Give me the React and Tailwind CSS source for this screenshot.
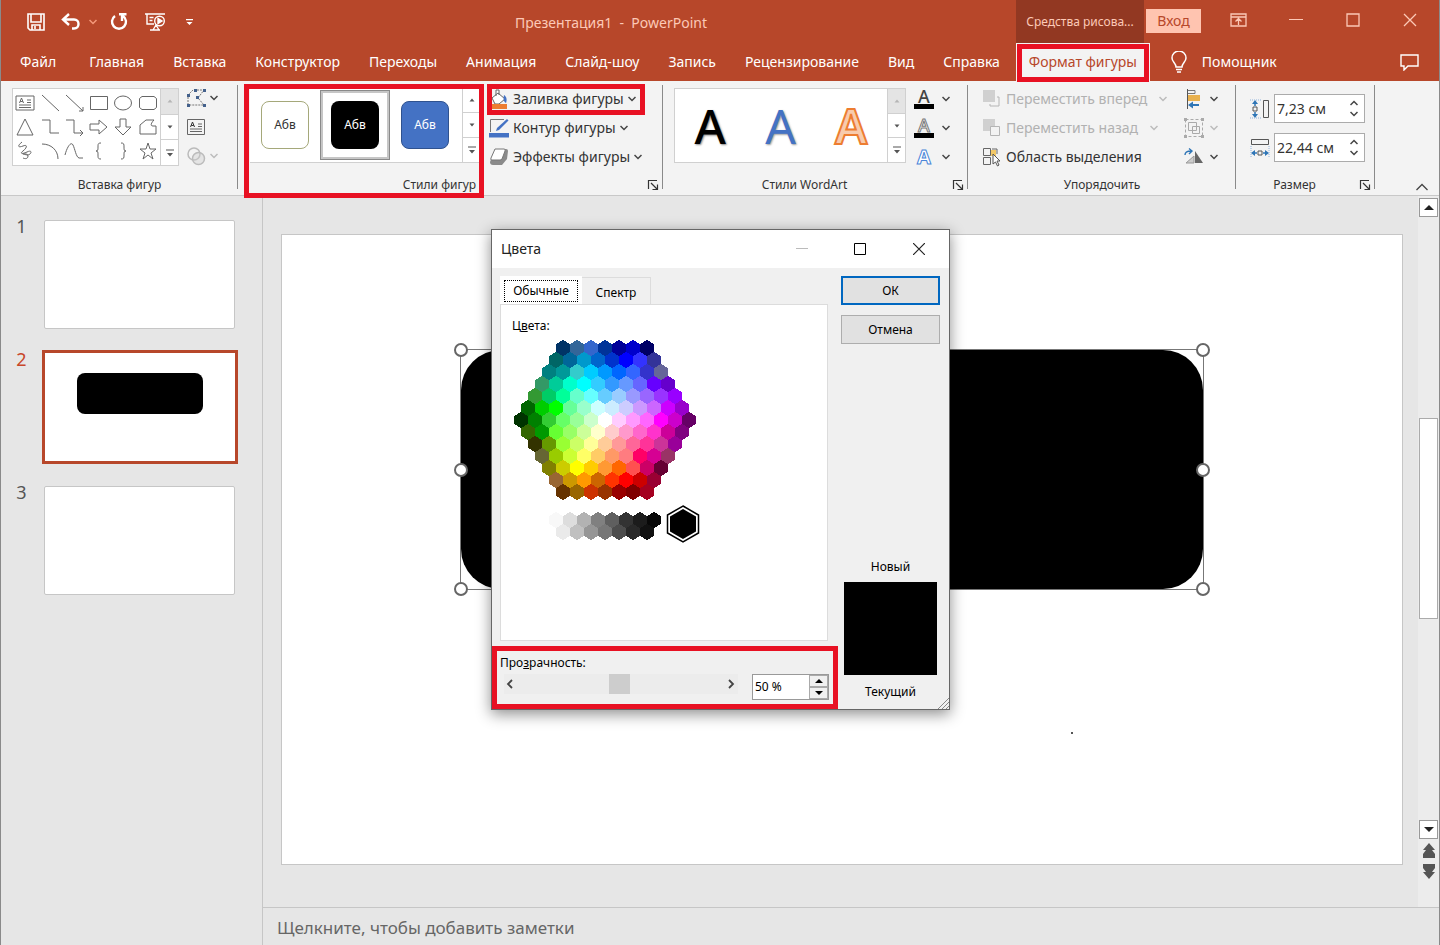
import { useState } from "react";

// Ribbon tabs
const tabs = [
  "Главная",
  "Вставка",
  "Конструктор",
  "Переходы",
  "Анимация",
  "Слайд-шоу",
  "Запись",
  "Рецензирование",
  "Вид",
  "Справка",
];

// Standard palette, one array per row of the honeycomb
const hexRows = [
  ["003366", "336699", "3366cc", "003399", "000099", "0000cc", "000066"],
  ["006666", "006699", "0099cc", "0066cc", "0033cc", "0000ff", "3333ff", "333399"],
  ["008080", "009999", "33cccc", "00ccff", "0099ff", "0066ff", "3366ff", "3333cc", "666699"],
  ["339966", "00cc99", "00ffcc", "00ffff", "33ccff", "3399ff", "6699ff", "6666ff", "6600ff", "6600cc"],
  ["339933", "00cc66", "00ff99", "66ffcc", "66ffff", "66ccff", "99ccff", "9999ff", "9966ff", "9933ff", "9900ff"],
  ["006600", "00cc00", "00ff00", "66ff99", "99ffcc", "ccffff", "ccecff", "ccccff", "cc99ff", "cc66ff", "cc00ff", "9900cc"],
  ["003300", "008000", "33cc33", "66ff66", "99ff99", "ccffcc", "ffffff", "ffccff", "ff99ff", "ff66ff", "ff00ff", "cc00cc", "660066"],
  ["336600", "009900", "66ff33", "99ff66", "ccff99", "ffffcc", "ffcccc", "ff99cc", "ff66cc", "ff33cc", "cc0099", "800080"],
  ["333300", "669900", "99ff33", "ccff66", "ffff99", "ffcc99", "ff9999", "ff6699", "ff3399", "cc3399", "990099"],
  ["666633", "99cc00", "ccff33", "ffff66", "ffcc66", "ff9966", "ff7c80", "ff0066", "d60093", "993366"],
  ["808000", "cccc00", "ffff00", "ffcc00", "ff9933", "ff6600", "ff5050", "cc0066", "660033"],
  ["996633", "cc9900", "ff9900", "cc6600", "ff3300", "ff0000", "cc0000", "990033"],
  ["663300", "996600", "cc3300", "993300", "990000", "800000", "a50021"],
];

const grayRows = [
  ["f8f8f8", "dddddd", "b2b2b2", "808080", "5f5f5f", "333333", "1c1c1c", "080808"],
  ["eaeaea", "c0c0c0", "969696", "777777", "4d4d4d", "292929", "111111"],
];

const hexPoints = (cx, cy, rx, ry) =>
  `${cx},${cy - ry} ${cx + rx},${cy - ry / 2} ${cx + rx},${cy + ry / 2} ${cx},${cy + ry} ${cx - rx},${cy + ry / 2} ${cx - rx},${cy - ry / 2}`;

// Shapes in the insert gallery, drawn on a 20x20 grid
const shapes = [
  { name: "Надпись", d: "M1 3h18v14H1zM12 7h4M12 9.500h4M4 12h12M4 14.500h12M4.500 10l2-5 2 5M5.200 8.500h2.600" },
  { name: "Линия", d: "M2 2l17 16" },
  { name: "Стрелка", d: "M2 2l17 16M19 14v4h-4" },
  { name: "Прямоугольник", d: "M1.500 3.500h17v13h-17z" },
  { name: "Овал", d: "M1.500 10a8.500 7 0 1 0 17 0a8.500 7 0 1 0-17 0z" },
  { name: "Скругленный прямоугольник", d: "M4 3.500h12l2.500 2v9l-2.500 2H4l-2.500-2v-9z" },
  { name: "Треугольник", d: "M10 2l8 16H2z" },
  { name: "Соединитель", d: "M2 3h8v13h9" },
  { name: "Соединитель со стрелкой", d: "M2 3h8v13h8M16 13l3 3-3 3" },
  { name: "Стрелка вправо", d: "M1 7h9V3l8 7-8 7v-4H1z" },
  { name: "Стрелка вниз", d: "M7 2h6v8h5l-8 8-8-8h5z" },
  { name: "Фигура", d: "M2 17V8l6-5h8c-3 3-4 6-1 6h3v8z" },
  { name: "Полилиния", d: "M7 1c-5 4-4 6 1 4s4 2 0 5 0 3 4 1 5 0 3 2-6 0-7 0 5-1 5 2-3 3-5 2" },
  { name: "Дуга", d: "M2 3c9 0 16 6 16 15" },
  { name: "Кривая", d: "M1 14c2-8 6-14 8-10s3 12 6 13h4" },
  { name: "Левая скобка", d: "M12 2c-3 0-3 1-3 4s0 4-2 4c2 0 2 1 2 4s0 4 3 4" },
  { name: "Правая скобка", d: "M8 2c3 0 3 1 3 4s0 4 2 4c-2 0-2 1-2 4s0 4-3 4" },
  { name: "Звезда", d: "M10 2l2 6h6l-5 4 2 6-5-4-5 4 2-6-5-4h6z" },
];

const Chevron = ({ className = "text-[#444]" }) => (
  <svg className={`w-2 h-2 shrink-0 ${className}`} viewBox="0 0 8 8" fill="none">
    <path d="M0.500 2l3.500 3.500L7.500 2" stroke="currentColor" strokeWidth="1.500" />
  </svg>
);

// Up / down / more strip at the right side of a gallery
const GalleryScroll = ({ name, upDisabled }) => (
  <div className="flex flex-col w-[18px] shrink-0 border-l border-[#d0d0d0] divide-y divide-[#d0d0d0]">
    <button
      aria-label={`${name}: вверх`}
      className={`flex-1 flex items-center justify-center ${upDisabled ? "bg-[#e4e4e4] text-[#b5b5b5]" : "bg-white text-[#555]"}`}
    >
      <svg width="6" height="4" viewBox="0 0 6 4"><path d="M0.500 3.500L3 0.500l2.500 3z" fill="currentColor" /></svg>
    </button>
    <button aria-label={`${name}: вниз`} className="flex-1 flex items-center justify-center bg-white text-[#555]">
      <svg width="6" height="4" viewBox="0 0 6 4"><path d="M0.500 0.500L3 3.500l2.500-3z" fill="currentColor" /></svg>
    </button>
    <button aria-label={`${name}: еще`} className="flex-1 flex items-center justify-center bg-white text-[#555]">
      <svg width="8" height="8" viewBox="0 0 8 8"><path d="M0 0.500h8v1H0zM1 4l3 3.500L7 4z" fill="currentColor" /></svg>
    </button>
  </div>
);

const Launcher = ({ name }) => (
  <button aria-label={name} className="absolute right-1 bottom-1 text-[#333]">
    <svg width="12" height="12" viewBox="0 0 12 12" fill="none" stroke="currentColor">
      <path d="M1.500 10V1.500H10M4 4l6 6M10.500 5.500v5h-5" strokeWidth="1.200" />
    </svg>
  </button>
);

// Ribbon group with a caption at the bottom
const Group = ({ label, width, launcher, children }) => (
  <section className={`relative shrink-0 pt-[7px] ${width}`}>
    <div className="flex items-start h-[85px]">{children}</div>
    <h2 className={`h-[22px] text-xs leading-6 text-center text-[#333] ${launcher ? "pr-[22px]" : ""}`}>{label}</h2>
    {launcher && <Launcher name={launcher} />}
    <div className="absolute right-0 top-1 bottom-[6px] w-px bg-[#8a8a8a]" />
  </section>
);

const Highlight = ({ className }) => (
  <div className={`absolute z-10 border-[#e81123] pointer-events-none ${className}`} />
);

const TextBoxIcon = () => (
  <svg className="w-5 h-5" viewBox="0 0 20 20" fill="none" stroke="#666">
    <path d="M1.500 2.500h17v15h-17zM12 7h4M12 9.500h4M4 12h12M4 14.500h12" />
    <path d="M4.500 10l2-5 2 5M5.200 8.500h2.600" stroke="#333" />
  </svg>
);

const TitleBar = () => (
  <div className="flex h-[43px] pr-px text-[#fcc9b7]">
    <div className="flex items-center w-[205px] pl-[26px] shrink-0 text-white">
      <button aria-label="Сохранить">
        <svg width="18" height="18" viewBox="0 0 18 18" fill="none" stroke="currentColor" strokeWidth="1.600">
          <path d="M1 1h16v16H3l-2-2zM4 1v8h10V1M5 17v-5h8v5M8 13v3" />
        </svg>
      </button>
      <button aria-label="Отменить" className="ml-4">
        <svg width="20" height="18" viewBox="0 0 20 18" fill="none" stroke="currentColor" strokeWidth="2.400">
          <path d="M8 1L2 6.500 8 12M2.500 6.500H13c6 0 6 9 0 9h-2" />
        </svg>
      </button>
      <button aria-label="Список отмены" className="ml-2">
        <Chevron className="text-[#f59a7c]" />
      </button>
      <button aria-label="Повторить" className="ml-3">
        <svg width="20" height="20" viewBox="0 0 20 20" fill="none" stroke="currentColor" strokeWidth="2.400">
          <path d="M6 4a7 7 0 1 0 8 0M10 2.200h7.500M13 2v7" />
        </svg>
      </button>
      <button aria-label="Начать показ" className="ml-4">
        <svg width="21" height="20" viewBox="0 0 21 20" fill="none" stroke="currentColor" strokeWidth="1.400">
          <path d="M0 2h20M2 2v10h7M4.500 5.500h4M4.500 8.500h3M8 18l3-5 3 5M5 18h10" />
          <circle cx="14.500" cy="9" r="4.800" />
          <path d="M13 6.500v5l4-2.500z" fill="currentColor" />
        </svg>
      </button>
      <button aria-label="Настройка панели быстрого доступа" className="ml-5">
        <svg width="7" height="8" viewBox="0 0 7 8" fill="currentColor"><path d="M0 1h7v1.300H0zM0.500 4h6l-3 3z" /></svg>
      </button>
    </div>
    <h1 className="flex-1 text-center text-sm leading-[45px] whitespace-pre">Презентация1  -  PowerPoint</h1>
    <div className="w-32 shrink-0 bg-[#923822] text-center text-xs leading-[43px]">Средства рисова...</div>
    <button className="w-[55px] h-6 mt-[9px] ml-[2px] bg-[#ffc4b0] text-sm text-[#b7472a]">Вход</button>
    <div className="flex h-10 ml-[9px]">
      <button aria-label="Параметры отображения ленты" className="w-[57px] flex items-center justify-center">
        <svg width="17" height="14" viewBox="0 0 17 14" fill="none" stroke="currentColor" strokeWidth="1.300">
          <path d="M1 1h15v12H1zM1 4h15M8.500 12V6M5.500 8.500l3-3 3 3" />
        </svg>
      </button>
      <button aria-label="Свернуть" className="w-[57px] flex items-center justify-center">
        <svg width="14" height="14" viewBox="0 0 14 14" fill="none" stroke="currentColor"><path d="M0 6.500h14" /></svg>
      </button>
      <button aria-label="Развернуть" className="w-[57px] flex items-center justify-center">
        <svg width="14" height="14" viewBox="0 0 14 14" fill="none" stroke="currentColor"><path d="M1 1h12v12H1z" strokeWidth="1.300" /></svg>
      </button>
      <button aria-label="Закрыть" className="w-[57px] flex items-center justify-center">
        <svg width="14" height="14" viewBox="0 0 14 14" fill="none" stroke="currentColor"><path d="M1 1l12 12M13 1L1 13" strokeWidth="1.300" /></svg>
      </button>
    </div>
  </div>
);

const TabBar = () => (
  <nav className="flex items-center h-[38px] pl-[19px] pr-5 text-sm text-white">
    <button className="mr-[33px]">Файл</button>
    <div className="flex gap-[29px]">
      {tabs.map((tab) => (
        <button key={tab}>{tab}</button>
      ))}
    </div>
    <div className="relative flex self-stretch ml-4">
      <button className="w-[134px] bg-[#f3f3f3] text-[#b7472a]">Формат фигуры</button>
      <Highlight className="inset-x-px top-px -bottom-px border-[5px]" />
    </div>
    <button className="flex items-center gap-[14px] ml-5">
      <svg width="18" height="22" viewBox="0 0 18 22" fill="none" stroke="currentColor" strokeWidth="1.500">
        <path d="M6 16c0-4-4-5-4-9a7 7 0 0 1 14 0c0 4-4 5-4 9zM6 18.500h6M7 21h4" />
      </svg>
      Помощник
    </button>
    <button aria-label="Примечания" className="ml-auto">
      <svg width="19" height="17" viewBox="0 0 19 17" fill="none" stroke="currentColor" strokeWidth="1.400">
        <path d="M1 1h17v11H8l-4 4v-4H1z" />
      </svg>
    </button>
  </nav>
);

const ShapeCommand = ({ label, icon }) => (
  <button className="flex items-center h-[29px] gap-1 text-sm text-[#333] whitespace-nowrap">
    {icon}
    {label}
    <Chevron />
  </button>
);

const fillIcon = (
  <svg className="w-5 h-5" viewBox="0 0 20 20" fill="none">
    <path d="M3 9l6-5 7 6-6 5H6zM7 7V1h3v5" fill="#fff" stroke="#666" />
    <path d="M15 6c3 2 3 5 2 8-2-1-3-3-2-8z" fill="#4472c4" />
    <path d="M1 15h17v5H1z" fill="#ed7d31" />
  </svg>
);
const outlineIcon = (
  <svg className="w-5 h-5" viewBox="0 0 20 20" fill="none">
    <path d="M1.500 14V1.500H15" stroke="#777" />
    <path d="M7 13l1-3 10-9 1.500 1.500L10 12z" fill="#4472c4" />
    <path d="M0 15h20v4.500H0z" fill="#4472c4" />
  </svg>
);
const effectsIcon = (
  <svg className="w-5 h-5" viewBox="0 0 20 20">
    <path d="M6 2h11q2 0 2 2l-1 8-5 6H4q-3 0-3-3z" fill="#8a8a8a" />
    <path d="M6 2h9q2 0 1 2l-3 8q-1 1-2 1H3q-2 0-1-2z" fill="#fff" stroke="#777" />
  </svg>
);

// Letter icon for WordArt fill / outline / effects
const LetterButton = ({ label, children }) => (
  <button aria-label={label} className="flex items-center gap-2 h-[29px]">
    <span className="flex flex-col items-center w-5">{children}</span>
    <Chevron />
  </button>
);

const SizeField = ({ id, label, value, icon }) => (
  <div className="flex items-center gap-1">
    {icon}
    <div className="flex w-[91px] h-[29px] bg-white border border-[#ababab]">
      <input id={id} aria-label={label} defaultValue={value} className="w-full min-w-0 pl-[2px] text-sm text-[#333] outline-none" />
      <div className="flex flex-col justify-between w-5 shrink-0 py-1">
        <button aria-label={`${label}: больше`} className="flex justify-center">
          <Chevron className="rotate-180 text-[#444]" />
        </button>
        <button aria-label={`${label}: меньше`} className="flex justify-center">
          <Chevron />
        </button>
      </div>
    </div>
  </div>
);

const Ribbon = () => (
  <div className="flex h-[115px] bg-[#f3f3f3] border-b border-[#c8c8c8]">
    <Group label="Вставка фигур" width="w-[237px]">
      <div className="flex w-[167px] h-[78px] ml-[11px] bg-white border border-[#d0d0d0]">
        <div className="grid grid-cols-6 flex-1 py-[2px]">
          {shapes.map((s) => (
            <button key={s.name} aria-label={s.name} className="flex items-center justify-center">
              <svg className="w-5 h-5" viewBox="0 0 20 20" fill="none" stroke="#666"><path d={s.d} /></svg>
            </button>
          ))}
        </div>
        <GalleryScroll name="Фигуры" upDisabled />
      </div>
      <div className="flex flex-col ml-[7px]">
        <button aria-label="Изменить фигуру" className="flex items-center gap-1 h-5">
          <svg className="w-5 h-5" viewBox="0 0 20 20" fill="none">
            <path d="M2 17V7l5-5h11l-6 8 6 7z" stroke="#777" strokeDasharray="2 1" />
            <path d="M1 6h3v3H1zM8 1h3v3H8zM17 1h3v3h-3zM10 8h3v3h-3zM17 16h3v3h-3zM1 16h3v3H1z" fill="#44618c" />
          </svg>
          <Chevron />
        </button>
        <button aria-label="Надпись" className="flex items-center h-[38px]">
          <TextBoxIcon />
        </button>
        <button aria-label="Объединить фигуры" className="flex items-center gap-1 h-5">
          <svg className="w-5 h-5" viewBox="0 0 20 20" fill="none" stroke="#bbb" strokeWidth="1.500">
            <circle cx="8" cy="8" r="6" /><circle cx="12.500" cy="12.500" r="6" fill="#ccc" fillOpacity=".4" />
          </svg>
          <Chevron className="text-[#bbb]" />
        </button>
      </div>
    </Group>

    <Group label="Стили фигур" width="w-[425px]" launcher="Формат фигуры">
      <div className="flex w-[230px] h-[75px] ml-[12px] bg-white border-b border-[#d0d0d0]">
        <div className="flex flex-1 items-start pt-[2px]">
          <button className="w-[70px] h-[70px] p-[11px] text-xs">
            <span className="flex items-center justify-center h-full bg-white border border-[#a5a87a] rounded-lg text-[#333]">Абв</span>
          </button>
          <button className="w-[70px] h-[70px] p-[8px] border-[3px] border-[#c6c6c6] outline outline-[#8a8a8a] -outline-offset-1 text-xs">
            <span className="flex items-center justify-center h-full bg-black rounded-lg text-white">Абв</span>
          </button>
          <button className="w-[70px] h-[70px] p-[11px] text-xs">
            <span className="flex items-center justify-center h-full bg-[#4472c4] border border-[#2f528f] rounded-lg text-white">Абв</span>
          </button>
        </div>
        <GalleryScroll name="Стили" />
      </div>
      <div className="flex flex-col ml-[9px] -mt-1">
        <ShapeCommand label="Заливка фигуры" icon={fillIcon} />
        <ShapeCommand label="Контур фигуры" icon={outlineIcon} />
        <ShapeCommand label="Эффекты фигуры" icon={effectsIcon} />
      </div>
      <Highlight className="left-[6px] top-[3px] w-[240px] h-[114px] border-[5px]" />
      <Highlight className="left-[249px] top-[3px] w-[158px] h-[31px] border-[5px]" />
    </Group>

    <Group label="Стили WordArt" width="w-[305px]" launcher="Эффекты текста">
      <div className="flex w-[232px] h-[75px] ml-[11px] bg-white border border-[#d0d0d0]">
        <div className="flex flex-1 items-center justify-around text-5xl leading-[70px]">
          <button className="text-black font-medium [text-shadow:1px_1px_2px_#888]">A</button>
          <button className="text-[#4472c4] [text-shadow:1px_1px_2px_#999]">A</button>
          <button className="text-[#f8cbad] font-semibold [-webkit-text-stroke:2px_#ed7d31]">A</button>
        </div>
        <GalleryScroll name="WordArt" upDisabled />
      </div>
      <div className="flex flex-col ml-2 -mt-1">
        <LetterButton label="Заливка текста">
          <span className="text-lg leading-4 font-medium text-[#444]">A</span>
          <span className="w-5 h-[5px] bg-black" />
        </LetterButton>
        <LetterButton label="Контур текста">
          <span className="text-lg leading-4 font-medium text-white [-webkit-text-stroke:1px_#777]">A</span>
          <span className="w-5 h-[5px] bg-black" />
        </LetterButton>
        <LetterButton label="Текстовые эффекты">
          <span className="text-xl leading-5 font-bold text-white [-webkit-text-stroke:1px_#4a86d8]">A</span>
        </LetterButton>
      </div>
    </Group>

    <Group label="Упорядочить" width="w-[268px]">
      <div className="flex flex-col w-[200px] ml-[14px] -mt-1 text-sm text-[#b1b1b1] whitespace-nowrap">
        <button className="flex items-center gap-1 h-[29px]" disabled>
          <svg className="w-5 h-5" viewBox="0 0 20 20" fill="none"><path d="M1 1h12v12H1z" fill="#d0d0d0" /><path d="M15 8h2v9H8v-2" stroke="#b5b5b5" /></svg>
          Переместить вперед
          <Chevron className="ml-2 text-[#bbb]" />
        </button>
        <button className="flex items-center gap-1 h-[29px]" disabled>
          <svg className="w-5 h-5" viewBox="0 0 20 20" fill="none"><path d="M1 1h12v12H1z" fill="#d0d0d0" /><path d="M8.500 8.500h9v9h-9z" fill="#f3f3f3" stroke="#b5b5b5" /></svg>
          Переместить назад
          <Chevron className="ml-2 text-[#bbb]" />
        </button>
        <button className="flex items-center gap-1 h-[29px] text-[#333]">
          <svg className="w-5 h-5" viewBox="0 0 20 20" fill="none">
            <path d="M8 3h6v6H8z" fill="#f3c969" />
            <path d="M1.500 1.500h7v7h-7zM1.500 10.500h7v7h-7zM10 2h5v5" stroke="#666" />
            <path d="M11 7v10l2.500-2 2 4 1.500-1-2-4h3z" fill="#fff" stroke="#555" />
          </svg>
          Область выделения
        </button>
      </div>
      <div className="flex flex-col ml-[2px] -mt-1">
        <button aria-label="Выровнять" className="flex items-center gap-[6px] h-[29px]">
          <svg className="w-5 h-5" viewBox="0 0 20 20" fill="none">
            <path d="M3.500 0v20" stroke="#555" /><path d="M4 1.500h7v3H4" stroke="#777" />
            <path d="M4 6h12v6H4z" fill="#e8b14f" /><path d="M4 16l5-3.500V15h6v2H9v2.500z" fill="#2e75b6" />
          </svg>
          <Chevron />
        </button>
        <button aria-label="Группировать" className="flex items-center gap-[6px] h-[29px]" disabled>
          <svg className="w-5 h-5" viewBox="0 0 20 20" fill="none" stroke="#aaa">
            <path d="M4.500 4.500h8v8h-8zM8.500 8.500h7v7h-7z" /><path d="M1.500 1.500h17v17h-17z" strokeDasharray="3 2" />
            <path d="M0 0h3v3H0zM17 0h3v3h-3zM0 17h3v3H0zM17 17h3v3h-3z" fill="#aaa" stroke="none" />
          </svg>
          <Chevron className="text-[#bbb]" />
        </button>
        <button aria-label="Повернуть" className="flex items-center gap-[6px] h-[29px]">
          <svg className="w-5 h-5" viewBox="0 0 20 20" fill="none"><path d="M11 16V4l8 12z" fill="#666" /><path d="M10 16V9l-8 7z" fill="#ccc" stroke="#999" /><path d="M1 8c0-3 2-4 6-4M5 1.500L8 4 5 7" stroke="#2e75b6" strokeWidth="1.400" /></svg>
          <Chevron />
        </button>
      </div>
    </Group>

    <Group label="Размер" width="w-[139px]" launcher="Размер и положение">
      <div className="flex flex-col gap-[10px] ml-[14px] pt-[6px]">
        <SizeField
          id="height"
          label="Высота фигуры"
          value="7,23 см"
          icon={
            <svg className="w-5 h-5" viewBox="0 0 20 20" fill="none">
              <path d="M13.500 1.500h5v17h-5z" stroke="#555" />
              <path d="M2 5l3-4 3 4zM2 15l3 4 3-4z" fill="#2e75b6" /><path d="M5 4v3M5 13v3" stroke="#2e75b6" strokeWidth="1.500" />
              <path d="M3 8h4v4H3z" stroke="#555" /><path d="M0 1h12M0 19h12" stroke="#8fb3dc" strokeDasharray="1 1" />
            </svg>
          }
        />
        <SizeField
          id="width"
          label="Ширина фигуры"
          value="22,44 см"
          icon={
            <svg className="w-5 h-5" viewBox="0 0 20 20" fill="none">
              <path d="M1.500 1.500h17v5h-17z" stroke="#555" />
              <path d="M5 12l-4 3 4 3zM15 12l4 3-4 3z" fill="#2e75b6" /><path d="M4 15h3M13 15h3" stroke="#2e75b6" strokeWidth="1.500" />
              <path d="M8 13h4v4H8z" stroke="#555" /><path d="M1 8v12M19 8v12" stroke="#8fb3dc" strokeDasharray="1 1" />
            </svg>
          }
        />
      </div>
    </Group>

    <button aria-label="Свернуть ленту" className="self-end ml-auto mr-[11px] mb-1">
      <svg width="12" height="8" viewBox="0 0 12 8" fill="none" stroke="#444" strokeWidth="1.300"><path d="M0.500 7L6 1.500 11.500 7" /></svg>
    </button>
  </div>
);

// Slide thumbnails
const Sidebar = () => (
  <aside className="w-[262px] shrink-0 pt-[25px] border-r border-[#c6c6c6]">
    <ol>
      {[1, 2, 3].map((n) => (
        <li key={n} className="flex h-[133px]">
          <span className={`w-[41px] text-lg leading-6 -mt-[7px] text-center ${n === 2 ? "text-[#c8472a]" : "text-[#555]"}`}>{n}</span>
          <button
            aria-label={`Слайд ${n}`}
            className={
              n === 2
                ? "flex justify-center items-start w-[196px] h-[114px] -mt-1 pt-5 bg-white border-[3px] border-[#b7472a]"
                : "w-[191px] h-[109px] ml-[2px] -mt-px bg-white border border-[#c6c6c6] rounded-xs"
            }
          >
            {n === 2 && <span className="w-[126px] h-[41px] bg-black rounded-lg" />}
          </button>
        </li>
      ))}
    </ol>
  </aside>
);

const handles = [
  "left-0 top-0",
  "left-full top-0",
  "left-0 top-1/2",
  "left-full top-1/2",
  "left-0 top-full",
  "left-full top-full",
];

const Slide = () => (
  <div className="relative aspect-video bg-white border border-[#c6c6c6]">
    <div className="absolute left-[178px] top-[114px] w-[744px] h-[241px] border border-[#777]">
      <div className="h-full bg-black rounded-[40px]" />
      {handles.map((pos) => (
        <span key={pos} className={`absolute w-[14px] h-[14px] -translate-1/2 bg-white border-2 border-[#666] rounded-full ${pos}`} />
      ))}
    </div>
    <span className="absolute left-[789px] top-[497px] w-[2px] h-[2px] bg-[#555]" />
  </div>
);

const ScrollBar = () => (
  <div className="flex flex-col items-center w-[21px] shrink-0 bg-[#ececec]">
    <button aria-label="Прокрутить вверх" className="flex items-center justify-center w-[19px] h-[19px] mt-[2px] bg-white border border-[#999]">
      <svg width="10" height="5" viewBox="0 0 10 5"><path d="M0 5l5-5 5 5z" fill="#222" /></svg>
    </button>
    <div className="flex items-center w-[19px] flex-1">
      <div className="w-full h-1/3 bg-white border border-[#ababab]" />
    </div>
    <button aria-label="Прокрутить вниз" className="flex items-center justify-center w-[19px] h-[19px] bg-white border border-[#999]">
      <svg width="10" height="5" viewBox="0 0 10 5"><path d="M0 0l5 5 5-5z" fill="#222" /></svg>
    </button>
    <button aria-label="Предыдущий слайд" className="mt-1">
      <svg width="14" height="16" viewBox="0 0 14 16"><path d="M7 0l6 7h-3l3 4v4H1v-4l3-4H1z" fill="#555" /></svg>
    </button>
    <button aria-label="Следующий слайд" className="mt-1 mb-7">
      <svg width="14" height="16" viewBox="0 0 14 16"><path d="M7 16l6-7h-3l3-4V1H1v4l3 4H1z" fill="#555" /></svg>
    </button>
  </div>
);

const HexPalette = () => (
  <svg width="190" height="205" viewBox="0 0 190 205" role="img" aria-label="Палитра цветов">
    <g shapeRendering="crispEdges">
      {hexRows.map((row, r) =>
        row.map((c, i) => (
          <polygon key={`${r}-${i}`} points={hexPoints(91 + (i - (row.length - 1) / 2) * 14, 8 + r * 12, 7, 8)} fill={`#${c}`} />
        ))
      )}
      {grayRows.map((row, r) =>
        row.map((c, i) => (
          <polygon key={`g${r}-${i}`} points={hexPoints(91 + (i - (row.length - 1) / 2) * 14, 180 + r * 12, 7, 8)} fill={`#${c}`} />
        ))
      )}
    </g>
    <polygon points={hexPoints(169, 184, 15.5, 18)} fill="#fff" stroke="#000" strokeWidth="1.500" />
    <polygon points={hexPoints(169, 184, 13, 15)} fill="#000" />
  </svg>
);

const ColorDialog = () => {
  const [opacity, setOpacity] = useState(50);
  const step = (delta) => setOpacity((v) => Math.min(100, Math.max(0, v + delta)));

  return (
    <div
      role="dialog"
      aria-label="Цвета"
      className="absolute left-[490px] top-[229px] z-20 flex flex-col w-[459px] h-[481px] bg-[#f0f0f0] border border-[#666] shadow-[0_4px_14px_rgba(0,0,0,0.45)] text-xs text-black"
    >
      <div className="flex items-center h-[38px] pl-[9px] pr-6 bg-white">
        <h2 className="flex-1 text-sm text-[#222]">Цвета</h2>
        <button aria-label="Свернуть окно" disabled>
          <svg width="12" height="12" viewBox="0 0 12 12" stroke="#bbb"><path d="M0 5.500h12" /></svg>
        </button>
        <button aria-label="Развернуть окно" className="ml-[46px]">
          <svg width="12" height="12" viewBox="0 0 12 12" fill="none" stroke="#000"><path d="M0.500 0.500h11v11H0.500z" /></svg>
        </button>
        <button aria-label="Закрыть окно" className="ml-[47px]">
          <svg width="12" height="12" viewBox="0 0 12 12" stroke="#222" strokeWidth="1.200"><path d="M0 0l12 12M12 0L0 12" /></svg>
        </button>
      </div>

      <div className="flex flex-1">
        <div className="flex flex-col w-[346px]">
          <div className="flex flex-col flex-1 pt-2 pl-2 pr-[10px] pb-[5px]">
            <div className="flex items-end h-7">
              <button className="w-[82px] h-7 pl-1 pr-1 pt-1 pb-[2px] bg-white">
                <span className="flex items-center justify-center h-full border border-dotted border-black">Обычные</span>
              </button>
              <button className="w-[69px] h-[27px] pt-1 border-t border-r border-[#dcdcdc]">Спектр</button>
            </div>
            <div className="flex-1 px-[11px] pt-[13px] bg-white border border-[#dcdcdc]">
              <p className="leading-4">
                Ц<u>в</u>ета:
              </p>
              <div className="mt-[6px] ml-[2px]">
                <HexPalette />
              </div>
            </div>
          </div>
          <div className="h-[63px] pt-[4px] pl-[3px] border-[5px] border-[#e81123]">
            <label htmlFor="opacity" className="block leading-4">
              Про<u>з</u>рачность:
            </label>
            <div className="flex">
              <div className="flex w-[234px] h-5 mt-[3px] ml-1 bg-[#ececec]">
                <button aria-label="Меньше" onClick={() => step(-1)} className="flex items-center justify-center w-[11px]">
                  <svg width="7" height="10" viewBox="0 0 7 10" fill="none" stroke="#444" strokeWidth="1.800"><path d="M6 1L2 5l4 4" /></svg>
                </button>
                <input
                  id="opacity"
                  type="range"
                  min="0"
                  max="100"
                  value={opacity}
                  onChange={(e) => setOpacity(Number(e.target.value))}
                  className="flex-1 min-w-0 h-5 appearance-none bg-transparent [&::-webkit-slider-thumb]:appearance-none [&::-webkit-slider-thumb]:w-[21px] [&::-webkit-slider-thumb]:h-5 [&::-webkit-slider-thumb]:bg-[#cdcdcd]"
                />
                <button aria-label="Больше" onClick={() => step(1)} className="flex items-center justify-center w-[14px]">
                  <svg width="7" height="10" viewBox="0 0 7 10" fill="none" stroke="#444" strokeWidth="1.800"><path d="M1 1l4 4-4 4" /></svg>
                </button>
              </div>
              <div className="flex w-[77px] h-[26px] mt-[3px] ml-[14px] bg-white border border-[#999]">
                <input
                  aria-label="Прозрачность, процент"
                  value={`${opacity} %`}
                  onChange={(e) => setOpacity(parseInt(e.target.value, 10) || 0)}
                  className="w-full min-w-0 pl-[2px] outline-none"
                />
                <div className="flex flex-col w-[19px] shrink-0">
                  <button aria-label="Увеличить" onClick={() => step(1)} className="flex-1 flex items-center justify-center bg-[#f0f0f0] border border-[#aaa]">
                    <svg width="8" height="4" viewBox="0 0 8 4"><path d="M0 4l4-4 4 4z" /></svg>
                  </button>
                  <button aria-label="Уменьшить" onClick={() => step(-1)} className="flex-1 flex items-center justify-center bg-[#f0f0f0] border border-[#aaa]">
                    <svg width="8" height="4" viewBox="0 0 8 4"><path d="M0 0l4 4 4-4z" /></svg>
                  </button>
                </div>
              </div>
            </div>
          </div>
        </div>

        <div className="flex flex-col items-center flex-1 pt-2 pb-[7px] pr-[6px]">
          <button className="w-[99px] h-[29px] bg-[#e1e1e1] border-2 border-[#0067c0]">ОК</button>
          <button className="w-[99px] h-[29px] mt-[10px] bg-[#e1e1e1] border border-[#adadad]">Отмена</button>
          <span className="mt-auto leading-4">Новый</span>
          <div className="w-[93px] h-[93px] my-[7px] bg-black" />
          <span className="leading-5">Текущий</span>
        </div>
      </div>
      <svg className="absolute right-0 bottom-0" width="11" height="11" viewBox="0 0 11 11" stroke="#888"><path d="M0 11L11 0M4 11l7-7M8 11l3-3" /></svg>
    </div>
  );
};

export default function App() {
  return (
    <div className="relative flex flex-col min-h-screen bg-[#e6e6e6] border-x border-[#8a8a8a] font-['Noto_Sans','Open_Sans',sans-serif]">
      <header className="bg-[#b7472a]">
        <TitleBar />
        <TabBar />
      </header>
      <Ribbon />
      <div className="flex flex-1">
        <Sidebar />
        <main className="flex flex-col flex-1">
          <div className="flex flex-1">
            <div className="flex-1 pt-[38px] pl-[18px] pr-[15px]">
              <Slide />
            </div>
            <ScrollBar />
          </div>
          <label className="block h-[38px] border-t border-[#c6c6c6]">
            <input
              aria-label="Заметки"
              placeholder="Щелкните, чтобы добавить заметки"
              className="w-full h-full pl-[14px] pt-[2px] text-[17px] outline-none placeholder:text-[#666]"
            />
          </label>
        </main>
      </div>
      <ColorDialog />
    </div>
  );
}
